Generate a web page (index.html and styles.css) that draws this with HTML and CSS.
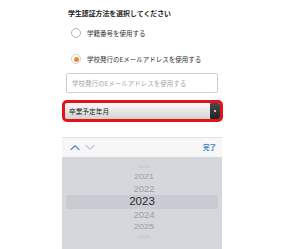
FILE: index.html
```html
<!DOCTYPE html>
<html lang="ja">
<head>
<meta charset="utf-8">
<link rel="stylesheet" href="styles.css">
</head>
<body>
<div class="page">
  <div class="title">学生認証方法を選択してください</div>
  <div class="radio-row first">
    <span class="radio"></span>
    <span class="radio-label">学籍番号を使用する</span>
  </div>
  <div class="radio-row second">
    <span class="radio checked"><span class="dot"></span></span>
    <span class="radio-label">学校発行のEメールアドレスを使用する</span>
  </div>
  <div class="input">学校発行のEメールアドレスを使用する</div>
  <div class="select">
    <span class="select-text">卒業予定年月</span>
    <span class="select-btn"><span class="select-dot"></span></span>
  </div>
  <div class="picker">
    <div class="toolbar">
      <div class="arrows">
        <svg class="chev up" width="10" height="7" viewBox="0 0 10 7"><path d="M1 5.5 L5 1.8 L9 5.5" fill="none" stroke="#5f86bd" stroke-width="1.2" stroke-linecap="round" stroke-linejoin="round"/></svg>
        <svg class="chev down" width="10" height="7" viewBox="0 0 10 7"><path d="M1 1.5 L5 5.2 L9 1.5" fill="none" stroke="#c3c8d1" stroke-width="1.2" stroke-linecap="round" stroke-linejoin="round"/></svg>
      </div>
      <span class="done">完了</span>
    </div>
    <div class="wheel">
      <div class="row r-far">2020</div>
      <div class="row r-near1">2021</div>
      <div class="row r-near2">2022</div>
      <div class="row r-sel"><span>2023</span></div>
      <div class="row r-near2b">2024</div>
      <div class="row r-near1b">2025</div>
      <div class="row r-farb">2026</div>
    </div>
  </div>
</div>
</body>
</html>
```
FILE: styles.css
```css
html, body {
  margin: 0;
  padding: 0;
  background: #ffffff;
}
body {
  width: 300px;
  height: 249px;
  overflow: hidden;
  font-family: "Noto Sans CJK JP", "Noto Sans", sans-serif;
}
.page {
  display: flex;
  flex-direction: column;
  margin-left: 62px;
  width: 161px;
}
.title {
  margin-top: 8px;
  margin-left: 6px;
  height: 10px;
  line-height: 10px;
  font-size: 6.9px;
  font-weight: bold;
  color: #222;
  white-space: nowrap;
}
.radio-row {
  display: flex;
  align-items: center;
  height: 14px;
  margin-left: 9px;
}
.radio-row.first { margin-top: 8px; }
.radio-row.second { margin-top: 12px; }
.radio {
  box-sizing: border-box;
  width: 10px;
  height: 10px;
  border: 1px solid #b3b3b3;
  border-radius: 50%;
  display: flex;
  align-items: center;
  justify-content: center;
  background: #fff;
}
.radio.checked {
  border-color: #cfcfcf;
}
.dot {
  width: 5px;
  height: 5px;
  border-radius: 50%;
  background: #f08a2a;
}
.radio-label {
  margin-left: 6px;
  font-size: 6.5px;
  line-height: 1;
  color: #333;
  white-space: nowrap;
}
.input {
  box-sizing: border-box;
  margin: 7px 5px 0 4px;
  height: 20px;
  border: 1px solid #cfcfcf;
  border-radius: 2px;
  padding-left: 5px;
  display: flex;
  align-items: center;
  font-size: 6.5px;
  line-height: 1;
  color: #a8a8a8;
  white-space: nowrap;
}
.select {
  box-sizing: border-box;
  margin-top: 7px;
  height: 22px;
  border: 3px solid #e3121b;
  border-radius: 5px;
  background: linear-gradient(#fbfbfb, #d2d2d2);
  display: flex;
  align-items: center;
  justify-content: space-between;
  padding-left: 4px;
}
.select-text {
  font-size: 6.7px;
  line-height: 1;
  color: #222;
  white-space: nowrap;
}
.select-btn {
  width: 10px;
  height: 16px;
  background: linear-gradient(#4a4a4a, #222);
  border-radius: 1px 2px 2px 1px;
  display: flex;
  align-items: center;
  justify-content: center;
}
.select-dot {
  width: 2px;
  height: 2px;
  background: #eee;
  border-radius: 1px;
}
.picker {
  margin-top: 15px;
  width: 160px;
}
.toolbar {
  box-sizing: border-box;
  height: 20px;
  background: #f7f7f7;
  border-top: 1px solid #e2e2e2;
  display: flex;
  align-items: center;
  justify-content: space-between;
  padding: 0 6px 0 8px;
}
.arrows {
  display: flex;
  gap: 5px;
  align-items: center;
}
.chev { display: block; }
.done {
  font-size: 6.5px;
  line-height: 1;
  font-weight: bold;
  color: #3d7fc6;
}
.wheel {
  height: 92px;
  background: #d4d7dc;
  display: flex;
  flex-direction: column;
  padding-top: 7px;
  box-sizing: border-box;
}
.row {
  display: flex;
  align-items: center;
  justify-content: center;
  font-family: "Liberation Sans", "Noto Sans", sans-serif;
  font-weight: 400;
  line-height: 1;
  color: #9ca0a7;
  padding-left: 4px;
}
.r-far {
  height: 7px;
  font-size: 5px;
  color: #bcc0c6;
  transform: scaleY(0.6);
}
.r-near1 {
  height: 11px;
  font-size: 9px;
  transform: scaleY(0.85);
}
.r-near2 {
  height: 13px;
  font-size: 9.5px;
}
.r-sel {
  height: 14px;
  margin: 0 4px;
  background: #c8cbd1;
  border-radius: 2px;
  padding-left: 0;
}
.r-sel span {
  font-size: 11.5px;
  line-height: 1;
  color: #2a2a2a;
}
.r-near2b {
  height: 12px;
  font-size: 9.5px;
}
.r-near1b {
  height: 11px;
  font-size: 9px;
  transform: scaleY(0.85);
}
.r-farb {
  height: 11px;
  font-size: 5px;
  color: #bcc0c6;
  transform: scaleY(0.6);
}
```
